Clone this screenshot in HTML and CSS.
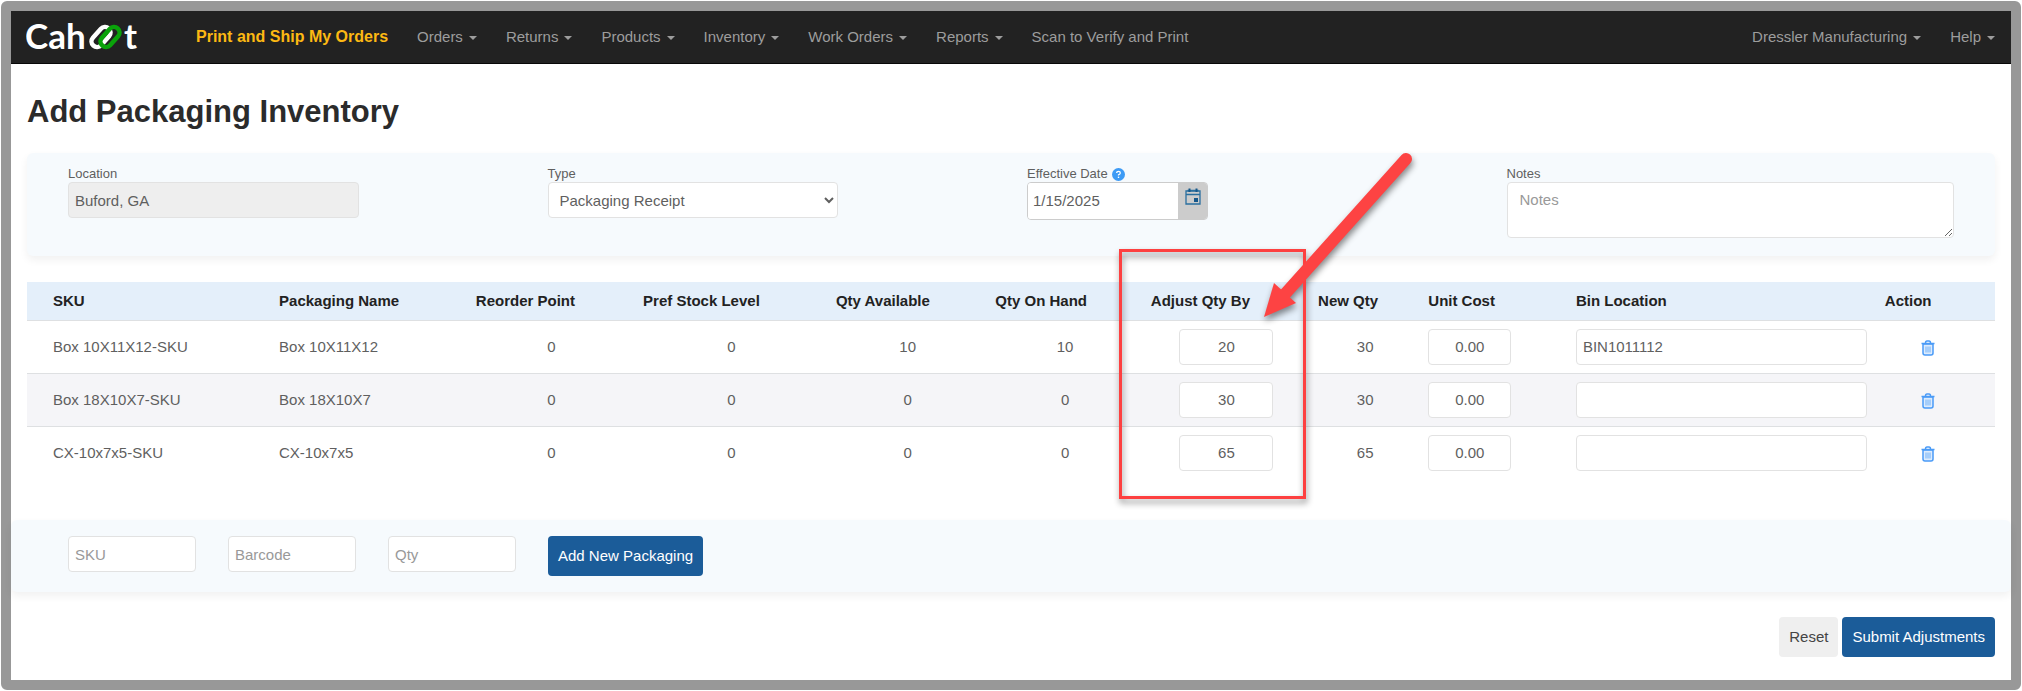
FILE: index.html
```html
<!DOCTYPE html>
<html lang="en">
<head>
<meta charset="utf-8">
<title>Add Packaging Inventory</title>
<link rel="stylesheet" href="styles.css">
</head>
<body>
<svg class="defs" aria-hidden="true">
  <symbol id="trash" viewBox="0 0 14 16">
    <path d="M2 4 V13 Q2 15 4 15 H10 Q12 15 12 13 V4 Z" fill="#dcebfd" stroke="#4a9bf7" stroke-width="1.5"/>
    <path d="M5 6.500 V12.500 M7 6.500 V12.500 M9 6.500 V12.500" stroke="#6fb0f8" stroke-width="1"/>
    <path d="M.5 3.500 H13.500 M4.500 3 Q4.500 1 6 1 H8 Q9.500 1 9.500 3" fill="none" stroke="#4a9bf7" stroke-width="1.500"/>
  </symbol>
</svg>
<div class="frame">
  <header class="navbar">
    <a class="brand" href="#" aria-label="Cahoot home">
      <svg width="120" height="46" viewBox="0 0 120 46">
        <text class="brand-text" x="-1" y="35">Cah</text>
        <g fill="none" stroke-width="4.500">
          <rect x="-5.500" y="-11.500" width="11" height="23" rx="5.500" transform="translate(75 23) rotate(42)" stroke="#fff"/>
          <rect x="-5.500" y="-11.500" width="11" height="23" rx="5.500" transform="translate(84 23) rotate(42)" stroke="#0aa30a"/>
        </g>
        <text class="brand-text" x="98" y="35">t</text>
      </svg>
    </a>
    <nav class="nav nav-main" aria-label="Main">
      <a class="primary" href="#">Print and Ship My Orders</a>
      <a class="drop" href="#">Orders</a>
      <a class="drop" href="#">Returns</a>
      <a class="drop" href="#">Products</a>
      <a class="drop" href="#">Inventory</a>
      <a class="drop" href="#">Work Orders</a>
      <a class="drop" href="#">Reports</a>
      <a href="#">Scan to Verify and Print</a>
    </nav>
    <nav class="nav" aria-label="Account">
      <a class="drop" href="#">Dressler Manufacturing</a>
      <a class="drop" href="#">Help</a>
    </nav>
  </header>

  <main class="content">
    <h1 class="title">Add Packaging Inventory</h1>

    <section class="panel filters">
      <div class="field">
        <label for="location">Location</label>
        <input class="control wide" id="location" type="text" value="Buford, GA" disabled>
      </div>
      <div class="field">
        <label for="type">Type</label>
        <select class="control wide" id="type"><option>Packaging Receipt</option></select>
      </div>
      <div class="field">
        <label for="date">Effective Date
          <svg class="help" width="13" height="13" viewBox="0 0 13 13" aria-hidden="true">
            <circle cx="6.500" cy="6.500" r="6.500" fill="#3d9bf5"/>
            <path d="M4.700 5 Q4.700 3.400 6.500 3.400 Q8.300 3.400 8.300 4.900 Q8.300 5.900 6.500 6.800 V7.600" fill="none" stroke="#fff" stroke-width="1.300"/>
            <rect x="5.800" y="8.600" width="1.400" height="1.400" fill="#fff"/>
          </svg>
        </label>
        <div class="date">
          <input class="date-input" id="date" type="text" value="1/15/2025">
          <button class="date-button" type="button" aria-label="Open calendar">
            <svg width="16" height="17" viewBox="0 0 16 17">
              <path d="M1 3 H15 V16 H1 Z M1 6.500 H15" fill="none" stroke="#2a6f9f" stroke-width="1.300"/>
              <path d="M2.500 2.500 H13.500" stroke="#2a6f9f" stroke-width="1.500"/>
              <path d="M4.500 .5 V4 M11.500 .5 V4" stroke="#15578a" stroke-width="2"/>
              <rect x="9" y="10" width="4" height="4" fill="#15578a"/>
            </svg>
          </button>
        </div>
      </div>
      <div class="field">
        <label for="notes">Notes</label>
        <textarea class="control notes" id="notes" placeholder="Notes"></textarea>
      </div>
    </section>

    <table class="grid">
      <colgroup>
        <col class="c-sku"><col class="c-name"><col class="c-reorder"><col class="c-pref"><col class="c-avail"><col class="c-hand"><col class="c-adjust"><col class="c-new"><col class="c-cost"><col class="c-bin"><col class="c-action">
      </colgroup>
      <thead>
        <tr><th>SKU</th><th>Packaging Name</th><th>Reorder Point</th><th>Pref Stock Level</th><th>Qty Available</th><th>Qty On Hand</th><th>Adjust Qty By</th><th>New Qty</th><th>Unit Cost</th><th>Bin Location</th><th>Action</th></tr>
      </thead>
      <tbody>
        <tr>
          <td>Box 10X11X12-SKU</td><td>Box 10X11X12</td><td class="num">0</td><td class="num">0</td><td class="num">10</td><td class="num">10</td>
          <td class="num"><input class="control qty" type="text" value="20" aria-label="Adjust quantity"></td><td class="num">30</td>
          <td><input class="control cost" type="text" value="0.00" aria-label="Unit cost"></td>
          <td><input class="control bin" type="text" value="BIN1011112" aria-label="Bin location"></td>
          <td class="action"><button class="icon-button" type="button" aria-label="Delete"><svg width="14" height="16"><use href="#trash"/></svg></button></td>
        </tr>
        <tr>
          <td>Box 18X10X7-SKU</td><td>Box 18X10X7</td><td class="num">0</td><td class="num">0</td><td class="num">0</td><td class="num">0</td>
          <td class="num"><input class="control qty" type="text" value="30" aria-label="Adjust quantity"></td><td class="num">30</td>
          <td><input class="control cost" type="text" value="0.00" aria-label="Unit cost"></td>
          <td><input class="control bin" type="text" aria-label="Bin location"></td>
          <td class="action"><button class="icon-button" type="button" aria-label="Delete"><svg width="14" height="16"><use href="#trash"/></svg></button></td>
        </tr>
        <tr>
          <td>CX-10x7x5-SKU</td><td>CX-10x7x5</td><td class="num">0</td><td class="num">0</td><td class="num">0</td><td class="num">0</td>
          <td class="num"><input class="control qty" type="text" value="65" aria-label="Adjust quantity"></td><td class="num">65</td>
          <td><input class="control cost" type="text" value="0.00" aria-label="Unit cost"></td>
          <td><input class="control bin" type="text" aria-label="Bin location"></td>
          <td class="action"><button class="icon-button" type="button" aria-label="Delete"><svg width="14" height="16"><use href="#trash"/></svg></button></td>
        </tr>
      </tbody>
    </table>
  </main>

  <form class="panel add-form">
    <input class="control add-field" type="text" placeholder="SKU" aria-label="SKU">
    <input class="control add-field" type="text" placeholder="Barcode" aria-label="Barcode">
    <input class="control add-field" type="text" placeholder="Qty" aria-label="Quantity">
    <button class="button button-primary" type="button">Add New Packaging</button>
  </form>

  <footer class="actions">
    <button class="button button-plain" type="button">Reset</button>
    <button class="button button-primary" type="button">Submit Adjustments</button>
  </footer>

  <svg class="callout" width="310" height="370" viewBox="0 0 310 370" aria-hidden="true">
    <rect x="11.500" y="110.500" width="184" height="247" fill="none" stroke="#fd4040" stroke-width="3"/>
    <g class="arrow">
      <path d="M297 19 L176 154" stroke="#fd4343" stroke-width="12" stroke-linecap="round"/>
      <path d="M155 177 L165 143 L187 163 Z" fill="#fd4343"/>
    </g>
  </svg>
</div>
</body>
</html>
```

FILE: styles.css
```css
* { box-sizing: border-box; }

body {
  margin: 0;
  background: #fff;
  color: #5f5f5f;
  font: 15px/20px "Liberation Sans", Arial, sans-serif;
}

input, select, textarea, button { font: inherit; color: inherit; }

.defs { display: none; }

.frame {
  position: relative;
  margin: 1px;
  border: 10px solid #989898;
  border-radius: 6px;
  padding-bottom: 23px;
}

.navbar {
  display: flex;
  align-items: center;
  height: 53px;
  padding: 0 16px 0 15px;
  background: #222;
  border-bottom: 1px solid #080808;
}

.brand {
  display: flex;
  width: 170px;
}

.brand-text {
  fill: #fff;
  font: bold 35px Lato, sans-serif;
}

.nav {
  display: flex;
  gap: 29px;
}

.nav-main { flex: 1; }

.nav a {
  color: #9d9d9d;
  text-decoration: none;
  white-space: nowrap;
}

.nav .primary {
  color: #fdb913;
  font-size: 16px;
  font-weight: bold;
}

.drop::after {
  content: "";
  display: inline-block;
  margin-left: 6px;
  vertical-align: middle;
  border: 4px solid transparent;
  border-top-color: currentColor;
  border-bottom: 0;
}

.content { padding: 28px 16px 0; }

.title {
  margin: 0 0 21px;
  color: #2b2b2b;
  font-size: 31px;
  line-height: 40px;
}

.panel {
  background: #f6fafd;
  border-radius: 6px;
  box-shadow: 0 4px 8px rgba(0, 0, 0, .06);
}

.filters {
  display: grid;
  grid-template-columns: repeat(4, 1fr);
  padding: 13px 25px 18px;
}

.field { padding: 0 16px; }

.field label {
  display: flex;
  align-items: center;
  gap: 4px;
  font-size: 13px;
  line-height: 16px;
}

.control {
  display: block;
  height: 36px;
  padding: 0 6px;
  background: #fff;
  border: 1px solid #e2e2e2;
  border-radius: 4px;
}

.control::placeholder { color: #999; }

.control:disabled { background: #eee; }

.wide { width: 65%; }

select.wide { padding: 0 7px; }

.notes {
  width: 100%;
  height: 56px;
  padding: 7px 12px;
}

.date {
  display: flex;
  width: 181px;
  height: 38px;
  border: 1px solid #ccc;
  border-radius: 4px;
  overflow: hidden;
}

.date-input {
  flex: 1;
  min-width: 0;
  padding: 0 5px;
  background: #fff;
  border: 0;
}

.date-button {
  width: 29px;
  padding: 0 0 4px;
  background: #ccc;
  border: 0;
}

.grid {
  width: 100%;
  margin-top: 26px;
  border-collapse: collapse;
  table-layout: fixed;
}

.c-sku { width: 12.4%; }
.c-name { width: 10%; }
.c-reorder { width: 8.5%; }
.c-pref { width: 9.8%; }
.c-avail { width: 8.1%; }
.c-hand { width: 7.9%; }
.c-adjust { width: 8.5%; }
.c-new { width: 5.6%; }
.c-cost { width: 7.5%; }
.c-bin { width: 15.7%; }
.c-action { width: 6%; }

.grid th, .grid td {
  padding: 0 8px;
  text-align: left;
}

.grid th {
  height: 38px;
  background: #e4effa;
  color: #222;
}

.grid td {
  height: 53px;
  border-top: 1px solid #dee0e2;
}

.grid th:first-child, .grid td:first-child { padding-left: 26px; }

.grid tbody tr:nth-child(even) { background: #f5f5f8; }

.grid .num { text-align: center; }

.grid .action {
  padding-right: 24px;
  text-align: center;
}

.qty {
  width: 94px;
  margin: 0 auto;
  text-align: center;
}

.cost {
  width: 83px;
  text-align: center;
}

.bin { width: 291px; }

.icon-button {
  display: inline-flex;
  padding: 0;
  vertical-align: middle;
  background: none;
  border: 0;
}

.add-form {
  display: flex;
  gap: 32px;
  margin-top: 41px;
  padding: 16px 57px;
}

.add-field { width: 128px; }

.button {
  height: 40px;
  padding: 0 10px;
  border: 0;
  border-radius: 4px;
}

.button-primary {
  background: #1b5c99;
  color: #fff;
}

.button-plain {
  background: #efefef;
  color: #444;
}

.actions {
  display: flex;
  justify-content: flex-end;
  gap: 4px;
  padding: 25px 16px 0;
}

/* Highlight box and arrow lying over the Adjust Qty By column */
.callout {
  position: absolute;
  top: 129px;
  left: 54.9%;
  filter: drop-shadow(1px 4px 3px rgba(0, 0, 0, .45));
  pointer-events: none;
}
```
